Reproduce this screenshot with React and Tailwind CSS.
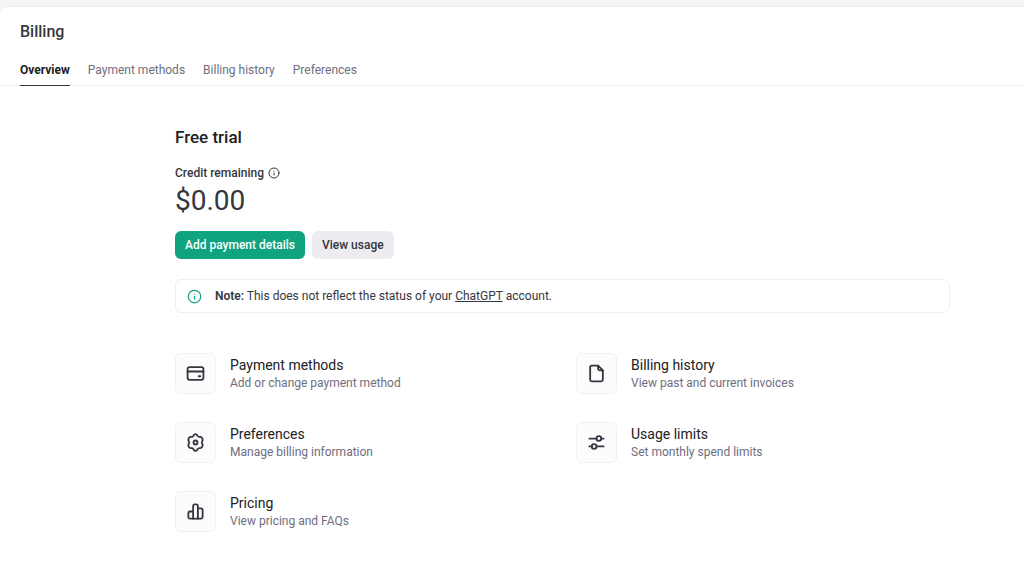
import { Info } from "lucide-react";

const tabs = ["Overview", "Payment methods", "Billing history", "Preferences"];

const iconProps = {
  width: 19,
  height: 19,
  viewBox: "0 0 24 24",
  fill: "none",
  stroke: "currentColor",
  strokeWidth: 2.3,
  strokeLinecap: "round",
  strokeLinejoin: "round",
  "aria-hidden": true,
};

const CardIcon = () => (
  <svg {...iconProps}>
    <rect x="2" y="4" width="20" height="16" rx="2.5" />
    <path d="M2 9.5h20M16 15.5h2" />
  </svg>
);

const FileIcon = () => (
  <svg {...iconProps}>
    <path d="M14 2H6a2 2 0 0 0-2 2v16a2 2 0 0 0 2 2h12a2 2 0 0 0 2-2V8z" />
    <path d="M14 2v4a2 2 0 0 0 2 2h4" />
  </svg>
);

const GearIcon = () => (
  <svg {...iconProps}>
    <path d="M9.8 2.8a2.5 2.5 0 0 1 4.400 0l.5.9a2.500 2.500 0 0 0 2.200 1.300h1.100a2.500 2.500 0 0 1 2.200 1.250l.6 1.100a2.500 2.500 0 0 1 0 2.400l-.5.9a2.500 2.500 0 0 0 0 2.700l.5.9a2.500 2.500 0 0 1 0 2.400l-.6 1.100a2.500 2.500 0 0 1-2.200 1.250h-1.100a2.500 2.500 0 0 0-2.200 1.300l-.5.9a2.500 2.500 0 0 1-4.400 0l-.5-.9a2.500 2.500 0 0 0-2.200-1.300H6a2.500 2.500 0 0 1-2.200-1.250l-.6-1.100a2.500 2.500 0 0 1 0-2.400l.5-.9a2.500 2.500 0 0 0 0-2.700l-.5-.9a2.500 2.500 0 0 1 0-2.400l.6-1.100A2.500 2.500 0 0 1 6 5h1.100a2.500 2.500 0 0 0 2.200-1.300z" />
    <circle cx="12" cy="12" r="2.5" />
  </svg>
);

const SlidersIcon = () => (
  <svg {...iconProps}>
    <path d="M3 7h9M18 7h3M3 17h3M12 17h9" />
    <circle cx="15" cy="7" r="3" />
    <circle cx="9" cy="17" r="3" />
  </svg>
);

const ChartIcon = () => (
  <svg {...iconProps}>
    <path d="M9 21H5a2 2 0 0 1-2-2v-5a2 2 0 0 1 2-2h4" />
    <path d="M9 21V5a2 2 0 0 1 2-2h2a2 2 0 0 1 2 2v16z" />
    <path d="M15 8h4a2 2 0 0 1 2 2v9a2 2 0 0 1-2 2h-4" />
  </svg>
);

const links = [
  { title: "Payment methods", text: "Add or change payment method", icon: CardIcon },
  { title: "Billing history", text: "View past and current invoices", icon: FileIcon },
  { title: "Preferences", text: "Manage billing information", icon: GearIcon },
  { title: "Usage limits", text: "Set monthly spend limits", icon: SlidersIcon },
  { title: "Pricing", text: "View pricing and FAQs", icon: ChartIcon },
];

function Header() {
  return (
    <header className="border-b border-[#f0f0f3] px-5 pt-[15px]">
      <h1 className="text-base leading-5 font-medium text-[#353740]">Billing</h1>
      <nav className="-mb-px mt-2 flex gap-[18px] text-xs">
        {tabs.map((tab, i) => (
          <a
            key={tab}
            href="#"
            className={
              i === 0
                ? "border-b border-[#353740] pt-3 pb-[7px] leading-4 font-bold text-[#202123]"
                : "border-b border-transparent pt-3 pb-[7px] leading-4 text-[#6e6e80]"
            }
          >
            {tab}
          </a>
        ))}
      </nav>
    </header>
  );
}

function QuickLink({ title, text, icon: Icon }) {
  return (
    <a href="#" className="flex items-center gap-3.5">
      <span className="flex size-[41px] shrink-0 items-center justify-center rounded-md border border-[#f0f0f3] bg-[#fcfcfd] text-[#353740]">
        <Icon />
      </span>
      <span>
        <span className="block text-sm leading-[18px] text-[#202123]">{title}</span>
        <span className="block text-xs leading-[18px] text-[#6e6e80]">{text}</span>
      </span>
    </a>
  );
}

export default function App() {
  return (
    <div className="min-h-screen bg-[#f4f4f4] pt-1.5 font-[Roboto,'Liberation_Sans',sans-serif] text-[#353740]">
      <div className="min-h-[calc(100vh-6px)] rounded-tl-lg border-t border-[#ececec] bg-white">
        <Header />

        <main className="pt-[39px] pr-[74px] pb-7 pl-[175px]">
          <h2 className="text-[17px] leading-6 font-medium text-[#202123]">Free trial</h2>

          <div className="mt-4 flex items-center gap-1 text-xs leading-4 font-medium">
            Credit remaining
            <Info size={12} />
          </div>
          <div className="text-[28px] leading-10">$0.00</div>

          <div className="mt-2.5 flex gap-[7px]">
            <button className="h-7 rounded-md bg-[#10a37f] px-2.5 text-xs font-medium text-white">
              Add payment details
            </button>
            <button className="h-7 rounded-md bg-[#ececf1] px-2.5 text-xs font-medium text-[#353740]">
              View usage
            </button>
          </div>

          <div className="mt-5 flex items-center gap-[13px] rounded-md border border-[#f0f0f3] px-[11px] py-2 text-xs leading-4">
            <Info size={15} className="shrink-0 text-[#10a37f]" />
            <p>
              <strong className="font-semibold">Note:</strong> This does not reflect the status of your{" "}
              <a href="#" className="underline">
                ChatGPT
              </a>{" "}
              account.
            </p>
          </div>

          <div className="mt-10 grid grid-cols-2 gap-x-[27px] gap-y-7">
            {links.map((link) => (
              <QuickLink key={link.title} {...link} />
            ))}
          </div>
        </main>
      </div>
    </div>
  );
}
